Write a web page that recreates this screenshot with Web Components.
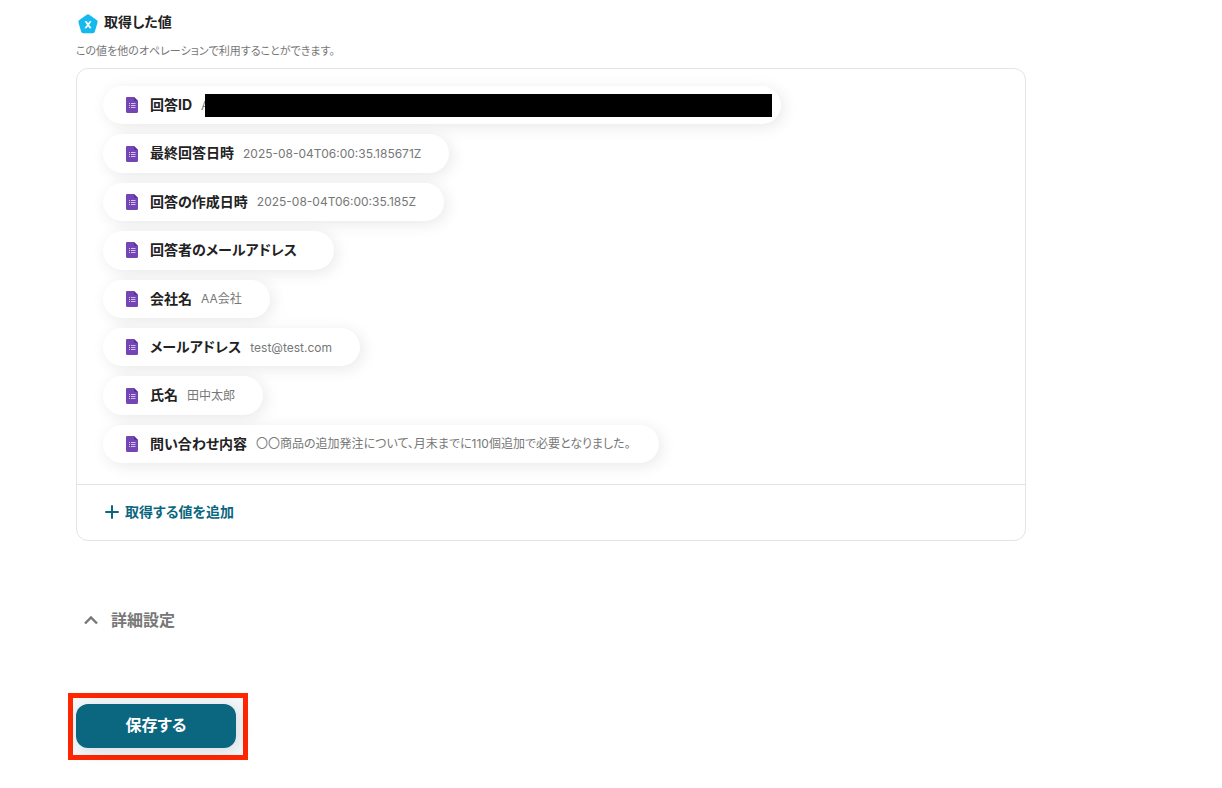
<!DOCTYPE html>
<html lang="ja">
<head>
<meta charset="utf-8">
<title>取得した値</title>
<style>
  body {
    margin: 0;
    background: #fff;
    color: #222;
    font: 14px/1.6 Inter, "Noto Sans CJK JP", sans-serif;
    font-feature-settings: "palt";
  }
</style>
</head>
<body>
<operation-page>
  <section-heading slot="heading">取得した値
    <span slot="note">この値を他のオペレーションで利用することができます。</span>
  </section-heading>
  <value-card slot="values">
    <value-chip label="回答ID" masked>A</value-chip>
    <value-chip label="最終回答日時">2025-08-04T06:00:35.185671Z</value-chip>
    <value-chip label="回答の作成日時">2025-08-04T06:00:35.185Z</value-chip>
    <value-chip label="回答者のメールアドレス"></value-chip>
    <value-chip label="会社名">AA会社</value-chip>
    <value-chip label="メールアドレス">test@test.com</value-chip>
    <value-chip label="氏名">田中太郎</value-chip>
    <value-chip label="問い合わせ内容">〇〇商品の追加発注について、月末までに110個追加で必要となりました。</value-chip>
    <add-button slot="footer">取得する値を追加</add-button>
  </value-card>
  <detail-toggle slot="details">詳細設定</detail-toggle>
  <save-button slot="actions">保存する</save-button>
</operation-page>

<script>
  const define = (name, html) => {
    const template = document.createElement('template');
    template.innerHTML = html;
    customElements.define(name, class extends HTMLElement {
      constructor() {
        super();
        this.attachShadow({ mode: 'open' }).append(template.content.cloneNode(true));
      }
      connectedCallback() {
        const label = this.shadowRoot.querySelector('[data-label]');
        if (label) label.textContent = this.getAttribute('label');
      }
    });
  };

  define('operation-page', `
    <style>
      :host { display: block; padding: 8px 196px 28px 68px; }
      .top { padding-left: 8px; }
      .details { padding: 64px 0 0 12px; }
      .actions { padding-top: 58px; }
    </style>
    <main>
      <div class="top"><slot name="heading"></slot><slot name="values"></slot></div>
      <div class="details"><slot name="details"></slot></div>
      <div class="actions"><slot name="actions"></slot></div>
    </main>`);

  define('section-heading', `
    <style>
      :host { display: block; }
      h2 { display: flex; align-items: center; gap: 4px; margin: 0; padding-top: 2px; font-size: 14px; line-height: 24px; font-weight: 700; }
      svg { width: 24px; height: 24px; margin-top: 2px; margin-bottom: -2px; }
      p { margin: 0; padding: 8px 0; color: #777; font-size: 11px; line-height: 18px; }
    </style>
    <h2>
      <svg viewBox="0 0 24 24" aria-hidden="true">
        <path d="M12 4.5 19.4 9.8 16.8 19H7.2L4.6 9.8Z" fill="#16b9ee" stroke="#16b9ee" stroke-width="4.4" stroke-linejoin="round"/>
        <path d="M8.6 9.2H10.8L15.6 16.2H13.4ZM13.6 9.2H15.6L10.6 16.2H8.4Z" fill="#fff"/>
      </svg>
      <slot></slot>
    </h2>
    <p><slot name="note"></slot></p>`);

  define('value-card', `
    <style>
      :host { display: block; border: 1px solid #e4e4e4; border-radius: 12px; background: #fff; }
      .list { display: flex; flex-direction: column; align-items: flex-start; gap: 10px; padding: 17px 26px 21px; }
      .footer { border-top: 1px solid #e4e4e4; padding: 16px 26px 17px; }
    </style>
    <div class="list"><slot></slot></div>
    <div class="footer"><slot name="footer"></slot></div>`);

  define('value-chip', `
    <style>
      :host {
        display: flex; align-items: center; padding: 8px 28px 8px 22px;
        border-radius: 20px; background: #fff; box-shadow: 3px 3px 16px rgba(0, 0, 0, .09);
      }
      svg { width: 14px; height: 16px; margin-right: 11px; }
      .label { font-weight: 700; }
      .value { position: relative; margin-left: 9px; color: #777; font-size: 12px; }
      :host([masked]) { padding-right: 9px; }
      :host([masked]) .value { width: 571px; }
      :host([masked]) .value::after {
        content: ""; position: absolute; inset: -2px 0 -2px 4px; background: #000;
      }
    </style>
    <svg viewBox="0 0 14 16" aria-hidden="true">
      <path d="M2 0H9L13 4V14.5Q13 16 11.5 16H2.5Q1 16 1 14.5V1Q1 0 2 0Z" fill="#7446b5"/>
      <path d="M9 0 13 4H10Q9 4 9 3Z" fill="#57309a"/>
      <path d="M4 6.5H5M6 6.5H10.5M4 8.5H5M6 8.5H10.5M4 10.5H5M6 10.5H10.5" stroke="#d3c2ec"/>
    </svg>
    <span class="label" data-label></span>
    <span class="value"><slot></slot></span>`);

  define('add-button', `
    <style>
      :host { display: block; }
      button {
        display: flex; align-items: center; gap: 6px; margin: 0; padding: 0 2px; border: 0; background: none;
        color: #0b6680; font: inherit; font-weight: 700; font-feature-settings: inherit; line-height: 22px; cursor: pointer;
      }
      svg { width: 14px; height: 14px; }
    </style>
    <button type="button">
      <svg viewBox="0 0 14 14" aria-hidden="true"><path d="M7 1V13M1 7H13" stroke="#0b6680" stroke-width="2" stroke-linecap="round"/></svg>
      <slot></slot>
    </button>`);

  define('detail-toggle', `
    <style>
      :host { display: block; }
      button {
        display: flex; align-items: center; gap: 13px; margin: 0; padding: 0 4px; border: 0; background: none;
        color: #777; font: inherit; font-size: 16px; font-weight: 700; font-feature-settings: inherit; line-height: 30px; cursor: pointer;
      }
      svg { width: 14px; height: 10px; }
    </style>
    <button type="button" aria-expanded="true">
      <svg viewBox="0 0 14 10" aria-hidden="true"><path d="M1 8.5 7 2.5 13 8.5" fill="none" stroke="#777" stroke-width="2.4"/></svg>
      <slot></slot>
    </button>`);

  define('save-button', `
    <style>
      :host { display: inline-block; border: 5px solid #ff2600; padding: 6px 7px 7px 3px; background: #f5f8fa; }
      button {
        display: block; width: 160px; height: 44px; margin: 0; padding: 0; border: 0; border-radius: 12px;
        background: #0b6680; color: #fff; font: inherit; font-size: 16px; font-weight: 700; font-feature-settings: inherit;
        box-shadow: 3px 3px 16px rgba(0, 0, 0, .12); cursor: pointer;
      }
    </style>
    <button type="button"><slot></slot></button>`);
</script>
</body>
</html>
